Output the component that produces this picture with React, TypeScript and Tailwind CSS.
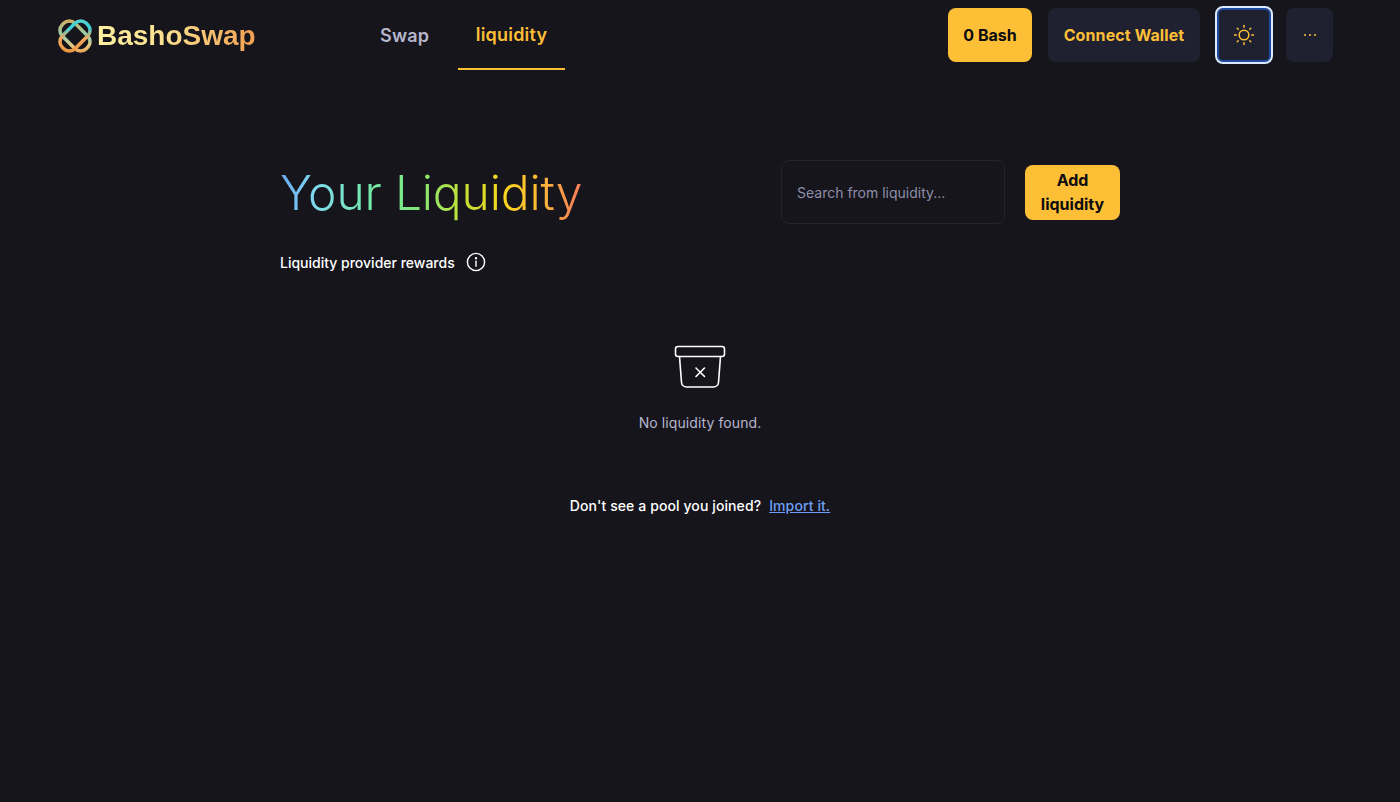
import React from "react";

const Logo = () => (
  <svg width="36" height="36" viewBox="0 0 36 36" fill="none">
    <defs>
      <linearGradient id="a" x1="3" y1="3" x2="33" y2="33" gradientUnits="userSpaceOnUse">
        <stop offset="0" stopColor="#e8a24a" />
        <stop offset="0.5" stopColor="#8fd0b0" />
        <stop offset="0.75" stopColor="#e9c77a" />
        <stop offset="1" stopColor="#e07f3a" />
      </linearGradient>
      <linearGradient id="b" x1="3" y1="33" x2="33" y2="3" gradientUnits="userSpaceOnUse">
        <stop offset="0" stopColor="#e8923a" />
        <stop offset="0.45" stopColor="#f2a65a" />
        <stop offset="0.7" stopColor="#35d0dc" />
        <stop offset="1" stopColor="#6fd0c0" />
      </linearGradient>
    </defs>
    <rect x="1" y="9" width="34" height="18" rx="8" stroke="url(#a)" strokeWidth="3.5" transform="rotate(45 18 18)" />
    <rect x="1" y="9" width="34" height="18" rx="8" stroke="url(#b)" strokeWidth="3.5" transform="rotate(-45 18 18)" />
  </svg>
);

const Sun = () => (
  <svg width="22" height="22" viewBox="0 0 22 22" fill="none" stroke="#fdbf36" strokeWidth="1.5" strokeLinecap="round">
    <circle cx="11" cy="11" r="4.8" />
    <path d="M11 1.5v1.7M11 18.8v1.7M1.5 11h1.7M18.8 11h1.7M4.3 4.3l.9.9M16.8 16.8l.9.9M4.3 17.7l.9-.9M16.8 5.2l.9-.9" />
  </svg>
);

const Info = () => (
  <svg width="20" height="20" viewBox="0 0 20 20" fill="none" stroke="#ffffff" strokeWidth="1.4" strokeLinecap="round">
    <circle cx="10" cy="10" r="8.6" />
    <path d="M10 9.2v5" />
    <circle cx="10" cy="6.2" r="0.5" fill="#ffffff" />
  </svg>
);

const Bin = () => (
  <svg width="52" height="44" viewBox="0 0 52 44" fill="none" stroke="#ffffff" strokeWidth="1.6" strokeLinecap="round" strokeLinejoin="round">
    <rect x="1.5" y="1.5" width="49" height="10" rx="2.5" />
    <path d="M5.5 11.5l2 26a5 5 0 0 0 5 4.5h27a5 5 0 0 0 5-4.5l2-26" />
    <path d="M22 23l8.5 8.5M30.5 23L22 31.5" />
  </svg>
);

export default function App() {
  return (
    <div className="min-h-[802px] overflow-hidden bg-[#16151c] font-['Inter','Open_Sans',sans-serif] text-white">
      <header className="flex h-[70px] items-start pl-[57px] pr-[67px]">
        <div className="flex h-[70px] w-[322px] items-center pt-[2px]">
          <Logo />
          <span className="ml-[4px] bg-[linear-gradient(90deg,#fdf0a0_0%,#fbdf8e_45%,#f0a050_100%)] bg-clip-text font-['Liberation_Sans',sans-serif] text-[28px] font-bold text-transparent">
            BashoSwap
          </span>
        </div>
        <nav className="flex h-[70px] items-center">
          <a className="w-[79px] pl-px text-[18px] font-semibold tracking-[0.2px] text-[#b5b5cc]">Swap</a>
          <a className="flex h-[70px] w-[107px] items-center justify-center border-b-2 border-[#fdbf36] text-[18px] font-semibold tracking-[0.2px] text-[#fdbf36]">
            liquidity
          </a>
        </nav>
        <div className="ml-auto flex items-start pt-2">
          <button className="flex h-[54px] w-[84px] items-center justify-center rounded-lg bg-[#fdbf36] text-[16px] font-bold text-[#0c0c10]">
            0 Bash
          </button>
          <button className="ml-4 flex h-[54px] w-[152px] items-center justify-center rounded-lg bg-[#1f2030] text-[16px] font-bold tracking-[0.1px] text-[#fdbf36]">
            Connect Wallet
          </button>
          <button className="ml-[15px] -mt-0.5 flex h-[58px] w-[58px] items-center justify-center rounded-lg border-2 border-[#dbeaff] bg-[#1f2030] shadow-[inset_0_0_0_2px_#1d4a9c]">
            <Sun />
          </button>
          <button className="ml-[13px] flex h-[54px] w-[47px] items-center justify-center gap-[3px] rounded-lg bg-[#1f2030]">
            <span className="h-[2px] w-[2px] rounded-full bg-[#fdbf36]" />
            <span className="h-[2px] w-[2px] rounded-full bg-[#fdbf36]" />
            <span className="h-[2px] w-[2px] rounded-full bg-[#fdbf36]" />
          </button>
        </div>
      </header>

      <main className="mx-auto w-[840px] pt-[86px]">
        <div className="flex items-center">
          <h1 className="w-[501px] pb-[3px] pt-[5px] text-[48px] font-light leading-[64px] tracking-[-0.17px]">
            <span className="inline-block w-[303px] text-nowrap bg-[linear-gradient(90deg,#6aa8f5_0%,#7fdcec_12%,#74e8b0_28%,#7fe87a_45%,#c9e030_62%,#fdd420_75%,#fbb03b_88%,#f5795c_100%)] bg-clip-text text-transparent">
              Your Liquidity
            </span>
          </h1>
          <div className="flex h-16 w-[224px] items-center rounded-lg border border-[#23242f] bg-[#16151c] pl-[15px] text-[14px] text-[#8e8ea8]">
            Search from liquidity...
          </div>
          <button className="ml-5 h-[55px] w-[95px] rounded-lg bg-[#fdbf36] text-[16px] font-bold leading-6 text-[#0c0c10]">
            Add liquidity
          </button>
        </div>
        <div className="mt-[24px] flex h-5 items-center text-[14px] font-medium">
          <span className="w-[186px]">Liquidity provider rewards</span>
          <Info />
        </div>
        <div className="mt-[73px] flex flex-col items-center">
          <Bin />
          <p className="mt-[24px] text-[14px] leading-5 tracking-[0.1px] text-[#b5b5cc]">No liquidity found.</p>
          <p className="mt-[63px] text-[14px] font-medium leading-5 tracking-[0.1px]">
            Don't see a pool you joined?
            <a className="ml-2 text-[#6d9ff5] underline">Import it.</a>
          </p>
        </div>
      </main>
    </div>
  );
}
